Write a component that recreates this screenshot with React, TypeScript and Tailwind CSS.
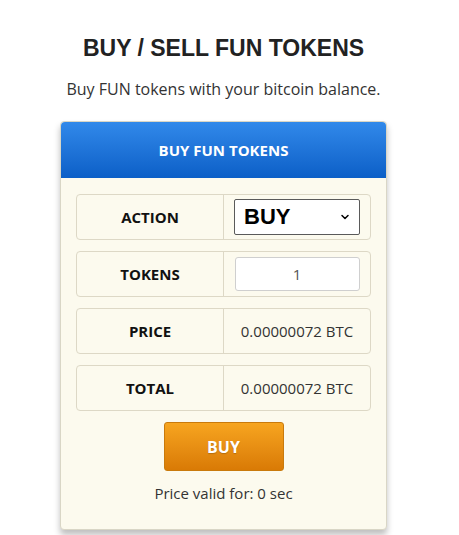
import { ChevronDown } from "lucide-react";

const body = { fontFamily: '"Open Sans", "Liberation Sans", sans-serif' };

const Row = ({ label, children }: { label: string; children: React.ReactNode }) => (
  <div className="flex h-[46px] rounded-[4px] border border-[#ddd8c6]">
    <div className="flex w-[147px] items-center justify-center border-r border-[#ddd8c6] text-[15px] font-bold text-[#111]">
      {label}
    </div>
    <div className="flex flex-1 items-center justify-center text-[15px] text-[#333]">{children}</div>
  </div>
);

export default function App() {
  return (
    <div className="flex h-[535px] w-[459px] flex-col items-center overflow-hidden bg-white pr-[12px]" style={body}>
      <h1
        className="pt-[35px] text-[23px] font-bold leading-[27px] text-[#222]"
        style={{ fontFamily: '"Liberation Sans", Arial, sans-serif' }}
      >
        BUY / SELL FUN TOKENS
      </h1>
      <p className="mt-[15px] text-[16px] leading-[24px] text-[#333]">Buy FUN tokens with your bitcoin balance.</p>

      <div className="mt-[20px] w-[327px] rounded-[4px] border border-[#d9d6c6] bg-[#fcfaee] shadow-[0_5px_6px_rgba(0,0,0,0.25)]">
        <div className="flex h-[56px] items-center justify-center rounded-t-[4px] bg-gradient-to-b from-[#3189ea] to-[#0b5fc7] text-[15px] font-bold text-white">
          BUY FUN TOKENS
        </div>
        <div className="flex flex-col items-center px-[15px] pt-[16px] pb-[25px]">
          <div className="flex w-full flex-col gap-[11px]">
            <Row label="ACTION">
              <div className="flex h-[36px] w-[126px] items-center justify-between rounded-[2px] border border-[#5a5a5a] bg-white pl-[9px] pr-[8px]">
                <span
                  className="text-[22px] font-bold leading-none text-black"
                  style={{ fontFamily: '"Liberation Sans", Arial, sans-serif' }}
                >
                  BUY
                </span>
                <ChevronDown size={12} strokeWidth={3} className="text-black" />
              </div>
            </Row>
            <Row label="TOKENS">
              <div className="flex h-[34px] w-[125px] items-center justify-center rounded-[3px] border border-[#cfcfcf] bg-white text-[15px] text-[#555]">
                1
              </div>
            </Row>
            <Row label="PRICE">0.00000072 BTC</Row>
            <Row label="TOTAL">0.00000072 BTC</Row>
          </div>
          <button className="mt-[11px] h-[49px] w-[120px] rounded-[3px] border border-[#c97a0c] bg-gradient-to-b from-[#f7a51f] to-[#d97a05] text-[16px] font-bold text-white [text-shadow:0_1px_1px_rgba(0,0,0,0.2)]">
            BUY
          </button>
          <p className="mt-[11px] text-[15px] leading-[22px] text-[#333]">Price valid for: 0 sec</p>
        </div>
      </div>
    </div>
  );
}
